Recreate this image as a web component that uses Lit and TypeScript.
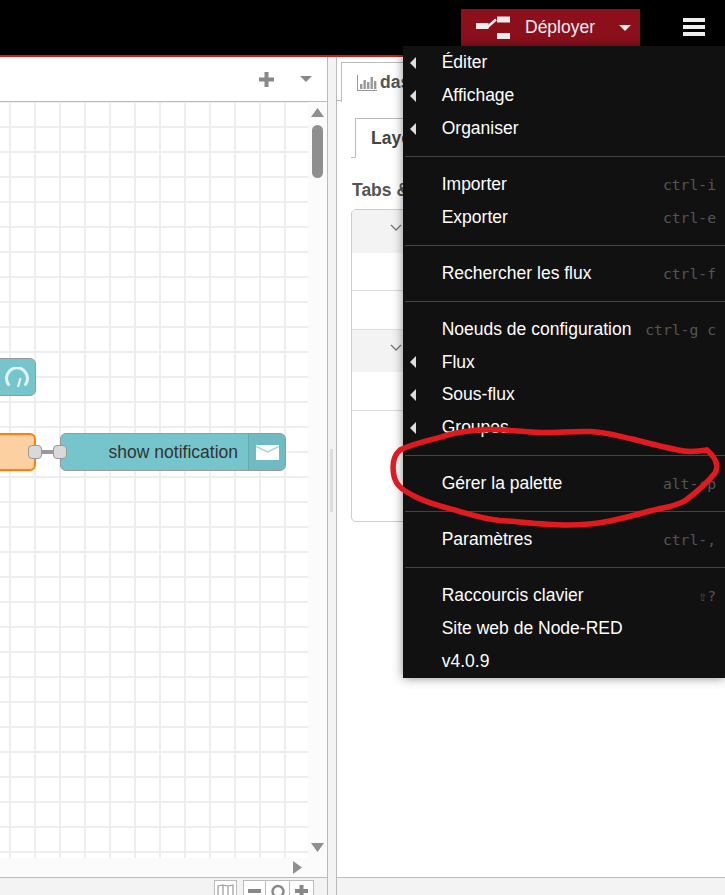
import { LitElement, html, css, svg } from 'lit'
import { customElement } from 'lit/decorators.js'

type Row = { label: string; sub?: boolean; key?: string }

const menuGroups: Row[][] = [
    [{ label: 'Éditer', sub: true }, { label: 'Affichage', sub: true }, { label: 'Organiser', sub: true }],
    [{ label: 'Importer', key: 'ctrl-i' }, { label: 'Exporter', key: 'ctrl-e' }],
    [{ label: 'Rechercher les flux', key: 'ctrl-f' }],
    [
        { label: 'Noeuds de configuration', key: 'ctrl-g c' },
        { label: 'Flux', sub: true },
        { label: 'Sous-flux', sub: true },
        { label: 'Groupes', sub: true }
    ],
    [{ label: 'Gérer la palette', key: 'alt-⇧p' }],
    [{ label: 'Paramètres', key: 'ctrl-,' }],
    [{ label: 'Raccourcis clavier', key: '⇧?' }, { label: 'Site web de Node-RED' }, { label: 'v4.0.9' }]
]

// hand drawn circle round the palette entry
const scribble =
    'M707 450 C695 452 686 452 678 450 C662 447 648 443 632 439 C618 436 606 432 590 431.5 ' +
    'C572 431 556 433 540 432.5 C522 432 506 429 488 429.5 C472 430 458 432 444 436 ' +
    'C428 441 412 444 400 450 C393 456 392 466 394 476 C396 486 404 491 416 497 ' +
    'C430 504 444 507 458 511 C472 515 484 519 500 520.5 C522 522 544 525 566 525 ' +
    'C582 525 596 524 610 521 C624 518 636 515 650 511 C664 507 676 507 686 500 ' +
    'C698 491 708 482 715 473 C719 466 716 458 707 450'

@customElement('app-root')
export class AppRoot extends LitElement {
    static styles = css`
        :host {
            display: block;
            position: relative;
            width: 725px;
            height: 895px;
            overflow: hidden;
            background: #fff;
            font-family: 'Liberation Sans', Arial, sans-serif;
            font-size: 17.5px;
        }

        .header {
            height: 55px;
            background: #000;
            border-bottom: 2px solid #c02020;
            display: flex;
            justify-content: flex-end;
            align-items: flex-start;
        }
        .deploy {
            margin-top: 9px;
            width: 179px;
            height: 37px;
            background: #8c101c;
            color: #eee;
            display: flex;
            align-items: center;
            box-sizing: border-box;
            padding-left: 15px;
        }
        .deploy span {
            margin-left: 15px;
            width: 94px;
        }
        .burger {
            margin: 18px 20px 0 43px;
            width: 22px;
            display: flex;
            flex-direction: column;
            gap: 3px;
        }
        .burger i {
            height: 4px;
            background: #eee;
            display: block;
        }

        .main {
            display: flex;
            height: 838px;
        }

        .workspace {
            width: 327px;
            display: flex;
            flex-direction: column;
        }
        .tabs {
            height: 44px;
            flex: none;
            border-bottom: 1px solid #bbb;
            display: flex;
            justify-content: flex-end;
            align-items: center;
            gap: 26px;
            padding-right: 15px;
        }
        .scroller {
            flex: 1;
            display: flex;
            flex-direction: column;
            background: #fbfbfb;
            min-height: 0;
        }
        .scroll-row {
            flex: 1;
            display: flex;
            min-height: 0;
        }
        .grid {
            flex: 1;
            position: relative;
            overflow: hidden;
            background-color: #fff;
            background-image: linear-gradient(to right, #eee 2px, transparent 2px),
                linear-gradient(to bottom, #eee 2px, transparent 2px);
            background-size: 25px 25px;
            background-position: 9px 24px;
        }
        .vbar {
            width: 19px;
            flex: none;
            display: flex;
            flex-direction: column;
            align-items: center;
            padding-top: 6px;
            box-sizing: border-box;
        }
        .vbar .thumb {
            width: 11px;
            height: 53px;
            margin-top: 8px;
            border-radius: 6px;
            background: #8f8f8f;
        }
        .vbar svg:last-child {
            margin-top: auto;
            margin-bottom: 6px;
        }
        .hbar {
            height: 19px;
            flex: none;
            display: flex;
            justify-content: flex-end;
            align-items: center;
            padding-right: 25px;
        }
        .footer {
            height: 18px;
            flex: none;
            box-sizing: border-box;
            border-top: 1px solid #bbb;
            background: #f3f3f3;
            display: flex;
            justify-content: flex-end;
            padding: 2px 13px 0 0;
            gap: 6px;
            overflow: hidden;
        }
        .zoom-group {
            display: flex;
        }
        .foot-btn {
            width: 23px;
            height: 24px;
            box-sizing: border-box;
            border: 1px solid #bbb;
            background: #fff;
            display: flex;
            justify-content: center;
            padding-top: 3px;
        }
        .zoom-group .foot-btn + .foot-btn {
            width: 24px;
            border-left: none;
        }

        .node {
            position: absolute;
            box-sizing: border-box;
            height: 38px;
            border: 1px solid #999;
            border-radius: 6px;
            background: #77c5cc;
        }
        .node.gauge {
            left: -40px;
            top: 256px;
            width: 76px;
        }
        .node.gauge svg {
            position: absolute;
            right: 6px;
            top: 8px;
        }
        .node.selected {
            left: -40px;
            top: 331px;
            width: 76px;
            background: #fdd0a2;
            border: 2px solid #ff7f0e;
        }
        .node.notify {
            left: 60px;
            top: 331px;
            width: 226px;
            display: flex;
            justify-content: flex-end;
            align-items: center;
            color: #333;
        }
        .notify .label {
            padding-right: 10px;
        }
        .notify .icon {
            width: 37px;
            height: 100%;
            background: rgba(0, 0, 0, 0.05);
            border-left: 1px solid rgba(0, 0, 0, 0.1);
            display: flex;
            align-items: center;
            justify-content: center;
            box-sizing: border-box;
            border-radius: 0 5px 5px 0;
        }
        .wire {
            position: absolute;
            left: 41px;
            top: 348px;
            width: 14px;
            height: 4px;
            background: #999;
        }
        .port {
            position: absolute;
            top: 343px;
            width: 14px;
            height: 14px;
            box-sizing: border-box;
            border: 1px solid #999;
            border-radius: 4px;
            background: #d9d9d9;
        }
        .port.out {
            left: 28px;
        }
        .port.in {
            left: 53px;
        }

        .divider {
            width: 10px;
            box-sizing: border-box;
            border-left: 1px solid #bbb;
            border-right: 1px solid #bbb;
            background: #f3f3f3;
            display: flex;
            align-items: center;
        }
        .divider i {
            display: block;
            width: 3px;
            height: 63px;
            margin: 9px 0 0 2px;
            background: #ddd;
        }

        .sidebar {
            flex: 1;
            display: flex;
            flex-direction: column;
            min-width: 0;
            color: #555;
        }
        .side-tabs {
            height: 44px;
            flex: none;
            box-sizing: border-box;
            border-bottom: 1px solid #bbb;
            padding: 5px 0 0 4px;
        }
        .side-tab {
            height: 40px;
            width: 200px;
            box-sizing: border-box;
            border: 1px solid #bbb;
            border-bottom: none;
            background: #fff;
            display: flex;
            align-items: center;
            gap: 3px;
            padding-left: 15px;
            font-weight: bold;
        }
        .side-body {
            flex: 1;
            padding: 17px 0 0 14px;
        }
        .layout-tabs {
            height: 40px;
            box-sizing: border-box;
            border-bottom: 1px solid #bbb;
            padding-left: 4px;
        }
        .layout-tab {
            height: 40px;
            width: 160px;
            box-sizing: border-box;
            border: 1px solid #bbb;
            border-bottom: 1px solid #fff;
            background: #fff;
            display: flex;
            align-items: center;
            padding-left: 15px;
            font-weight: bold;
            color: #444;
        }
        .section-title {
            font-weight: bold;
            margin: 22px 0 9px 1px;
            line-height: 20px;
            color: #555;
        }
        .list {
            width: 340px;
            height: 313px;
            box-sizing: border-box;
            border: 1px solid #ccc;
            border-radius: 5px;
            overflow: hidden;
            display: grid;
            grid-template-rows: 43px 38px 39px 42px 39px;
        }
        .list-head {
            background: #f3f3f3;
            padding: 14px 0 0 38px;
            box-sizing: border-box;
            display: flex;
            align-items: flex-start;
        }
        .list-row {
            box-sizing: border-box;
            border-bottom: 1px solid #ddd;
        }
        .side-foot {
            height: 18px;
            flex: none;
            box-sizing: border-box;
            border-top: 1px solid #bbb;
            background: #f3f3f3;
        }

        .menu {
            position: absolute;
            left: 403px;
            top: 46px;
            width: 322px;
            padding-top: 0.55px;
            background: #111;
            color: #fff;
            box-shadow: 0 0 10px rgba(0, 0, 0, 0.45);
        }
        .row {
            height: 32.8px;
            display: flex;
            align-items: center;
            position: relative;
            padding: 0 9px 0 38.7px;
        }
        .row .name {
            flex: 1;
            white-space: nowrap;
        }
        .row .key {
            font-family: 'DejaVu Sans Mono', 'Liberation Mono', monospace;
            font-size: 14.7px;
            color: #555;
            white-space: nowrap;
        }
        .row .arrow {
            position: absolute;
            left: 7px;
            top: 10.5px;
            width: 0;
            height: 0;
            border-top: 6px solid transparent;
            border-bottom: 6px solid transparent;
            border-right: 6px solid #ddd;
        }
        .sep {
            height: 1px;
            margin: 11.1px 0 11.1px 2px;
            background: #444;
        }

        .scribble {
            position: absolute;
            left: 0;
            top: 0;
            pointer-events: none;
        }
    `

    render() {
        return html`
            <div class="header">
                <div class="deploy">
                    <svg width="34" height="24" viewBox="0 0 34 24" fill="#eee">
                        <rect x="0" y="7" width="12.5" height="6" />
                        <rect x="21" y="0.5" width="13" height="6" />
                        <rect x="21" y="17" width="13" height="6" />
                        <path d="M11 11.5 L20 3.5" stroke="#eee" stroke-width="2.4" fill="none" />
                    </svg>
                    <span>Déployer</span>
                    <svg width="12" height="6" viewBox="0 0 12 6" fill="#eee"><path d="M0 0h12L6 6z" /></svg>
                </div>
                <div class="burger"><i></i><i></i><i></i></div>
            </div>
            <div class="main">
                <div class="workspace">
                    <div class="tabs">
                        <svg width="15" height="15" viewBox="0 0 15 15" fill="#888">
                            <path d="M5.5 0h4v5.5H15v4H9.5V15h-4V9.5H0v-4h5.5z" />
                        </svg>
                        <svg width="12" height="6" viewBox="0 0 12 6" fill="#888"><path d="M0 0h12L6 6z" /></svg>
                    </div>
                    <div class="scroller">
                        <div class="scroll-row">
                            <div class="grid">
                                <div class="node gauge">
                                    <svg width="24" height="22" viewBox="0 0 24 22" fill="none" stroke="#e3f3f4" stroke-width="3">
                                        <path d="M3.5 17.5 A10.5 10.5 0 1 1 20.5 17.5" stroke-linecap="round" />
                                        <path d="M13 20 L15.5 11" stroke-width="2.2" />
                                    </svg>
                                </div>
                                <div class="node selected"></div>
                                <div class="node notify">
                                    <span class="label">show notification</span>
                                    <div class="icon">
                                        <svg width="23" height="15" viewBox="0 0 23 15">
                                            <rect width="23" height="15" fill="#fff" />
                                            <path d="M0 1.5 L11.5 7 L23 1.5" fill="none" stroke="#9fd6db" stroke-width="1.4" />
                                        </svg>
                                    </div>
                                </div>
                                <div class="wire"></div>
                                <div class="port out"></div>
                                <div class="port in"></div>
                            </div>
                            <div class="vbar">
                                <svg width="13" height="9" viewBox="0 0 13 9" fill="#8f8f8f"><path d="M6.5 0L13 9H0z" /></svg>
                                <div class="thumb"></div>
                                <svg width="13" height="9" viewBox="0 0 13 9" fill="#8f8f8f"><path d="M0 0h13L6.5 9z" /></svg>
                            </div>
                        </div>
                        <div class="hbar">
                            <svg width="9" height="13" viewBox="0 0 9 13" fill="#8f8f8f"><path d="M0 0l9 6.5L0 13z" /></svg>
                        </div>
                    </div>
                    <div class="footer">
                        <div class="foot-btn">
                            <svg width="17" height="16" viewBox="0 0 17 16" fill="none" stroke="#999" stroke-width="1.2">
                                <path d="M1 2 L6 1 L11 2 L16 1 V15 L11 16 L6 15 L1 16 Z M6 1 V15 M11 2 V16" />
                            </svg>
                        </div>
                        <div class="zoom-group">
                            <div class="foot-btn">
                                <svg width="13" height="15" viewBox="0 0 13 15" fill="#888"><rect y="5" width="13" height="4" /></svg>
                            </div>
                            <div class="foot-btn">
                                <svg width="14" height="15" viewBox="0 0 14 15" fill="none" stroke="#888" stroke-width="2.4">
                                    <circle cx="7" cy="7.5" r="5.5" />
                                </svg>
                            </div>
                            <div class="foot-btn">
                                <svg width="13" height="15" viewBox="0 0 13 15" fill="#888">
                                    <path d="M4.5 1h4v4H13v4H8.5v5h-4V9H0V5h4.5z" />
                                </svg>
                            </div>
                        </div>
                    </div>
                </div>
                <div class="divider"><i></i></div>
                <div class="sidebar">
                    <div class="side-tabs">
                        <div class="side-tab">
                            <svg width="20" height="16" viewBox="0 0 20 16" fill="#999">
                                <path d="M0 0h1v15h19v1H0z" />
                                <rect x="3" y="9" width="2.4" height="5" />
                                <rect x="6.5" y="5" width="2.4" height="9" />
                                <rect x="10" y="7" width="2.4" height="7" />
                                <rect x="13.5" y="2" width="2.4" height="12" />
                                <rect x="17" y="6" width="2.4" height="8" />
                            </svg>
                            <span>dashboard</span>
                        </div>
                    </div>
                    <div class="side-body">
                        <div class="layout-tabs"><div class="layout-tab">Layout</div></div>
                        <div class="section-title">Tabs &amp; Links</div>
                        <div class="list">
                            <div class="list-head">${this.chevron()}</div>
                            <div class="list-row"></div>
                            <div class="list-row"></div>
                            <div class="list-head">${this.chevron()}</div>
                            <div class="list-row"></div>
                        </div>
                    </div>
                    <div class="side-foot"></div>
                </div>
            </div>
            <div class="menu">
                ${menuGroups.map(
                    (group, i) => html`
                        ${i ? html`<div class="sep"></div>` : ''}
                        ${group.map(
                            (row) => html`
                                <div class="row">
                                    ${row.sub ? html`<i class="arrow"></i>` : ''}
                                    <span class="name">${row.label}</span>
                                    ${row.key ? html`<span class="key">${row.key}</span>` : ''}
                                </div>
                            `
                        )}
                    `
                )}
            </div>
            <svg class="scribble" width="725" height="895" viewBox="0 0 725 895" fill="none">
                ${svg`<path d=${scribble} stroke="#e01b1f" stroke-width="5.5" stroke-linecap="round" stroke-linejoin="round" />`}
            </svg>
        `
    }

    chevron() {
        return html`
            <svg width="12" height="8" viewBox="0 0 12 8" fill="none" stroke="#777" stroke-width="1.3">
                <path d="M1 1l5 5 5-5" />
            </svg>
        `
    }
}
